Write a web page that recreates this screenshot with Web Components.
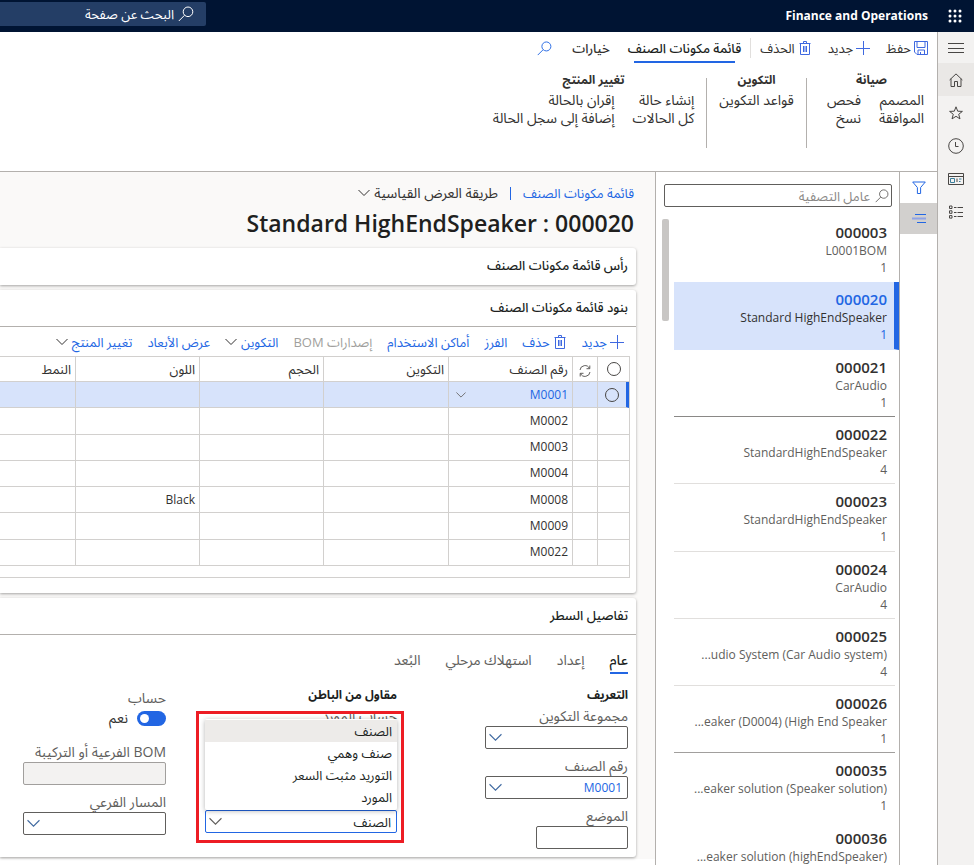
<!DOCTYPE html>
<html lang="ar" dir="rtl">
<head>
<meta charset="utf-8">
<title>Finance and Operations</title>
<style>
html, body { margin: 0; height: 100%; }
body { font-family: "Open Sans", "Noto Sans Arabic", "DejaVu Sans", sans-serif; font-size: 13px; line-height: 18px; color: #323130; background: #fff; overflow: hidden;
  --accent: #2266e3; --line: #b3b0ad; --soft: #d2d0ce; --field: #605e5c; }
</style>
</head>
<body>
<finops-app></finops-app>
<script>
const RESET = `
*{box-sizing:border-box}
button,input,select{font:inherit;color:inherit;margin:0;padding:0;border:0;background:none;appearance:none;border-radius:0;text-align:start}
button{white-space:nowrap;cursor:pointer}
ul{list-style:none;margin:0;padding:0}
h1,h2,h3,p{margin:0;font-size:inherit;font-weight:inherit}
a{text-decoration:none}
`;
function define(name, css, html) {
  customElements.define(name, class extends HTMLElement {
    constructor() {
      super();
      this.attachShadow({ mode: "open" });
    }
    connectedCallback() {
      const body = typeof html === "function" ? html(this) : html;
      this.shadowRoot.innerHTML = `<style>${RESET}${css}</style>${body}`;
    }
  });
}

const ICONS = {
  waffle: [14, `<g fill="currentColor" stroke="none">${[0, 5, 10].map(y => [0, 5, 10].map(x => `<circle cx="${x + 2}" cy="${y + 2}" r="1.5"/>`).join("")).join("")}</g>`],
  search: [16, `<circle cx="10" cy="5.8" r="4.8"/><path d="M6.5 9.3 0.8 15"/>`],
  save: [14, `<path d="M.5.5h13v13H3L.5 11z"/><path d="M3 .5v6h8v-6M4 13.5V9h6.500v4.500M6.500 13.500v-2.500"/>`],
  plus: [14, `<path d="M7.500 0v14M0 7.500h14"/>`],
  trash: [14, `<path d="M1.500 2.500h11M5.500 2.500V.5h3v2M2.500 2.500v11h9v-11M5.500 5v6M7 5v6M8.500 5v6"/>`],
  chevron: [12, `<path d="M.5 3 6 8.500 11.500 3"/>`],
  menu: [16, `<path d="M0 3.500h16M0 8.500h16M0 12.500h16"/>`],
  home: [14, `<path d="M.6 7 7 .9 13.400 7M2 5.700v7.800h3.500V8.500h3v5H12V5.700"/>`],
  star: [14, `<path d="M7 .8 8.700 5.200l4.700.2-3.700 2.900 1.300 4.600L7 10.300l-4 2.600 1.300-4.600L.6 5.400l4.700-.2z"/>`],
  clock: [16, `<circle cx="8" cy="8" r="7.300"/><path d="M7.500 4v4.500h3"/>`],
  workspace: [16, `<path d="M.5 2.500h15v11H.5zM.5 5.500h15"/><path d="M2.500 7.500h4v4h-4zM11 8h2.500M11 10.500h1.500" stroke="#3b7f9c"/><path d="M9 7.500v3.500"/>`],
  modules: [16, `<path d="M1.500 2h2.500v2.500H1.500zM1.500 6.800h2.500v2.500H1.500zM1.500 11.600h2.500v2.500H1.500zM6 3.500h2.500M9.500 3.500H15M6 8.500h2.500M9.500 8.500H15M6 12.500h2.500M9.500 12.500H15"/>`],
  funnel: [14, `<path d="M.7 1h12.600L8.600 6.500V12.500H5.400V6.500z"/>`],
  lines: [14, `<path d="M3 2.500h11M5 10.500h9"/><path d="M0 6.500h14" stroke="#8fa3e6" stroke-width="2"/>`],
  refresh: [12, `<path d="M1 5a5 5 0 0 1 9.500-1.500M11 7a5 5 0 0 1-9.500 1.500M10.800.5v3.200H7.500M1.200 11.500V8.300h3.300"/>`]
};
define("ui-icon", `:host{display:inline-flex;flex:none}svg{display:block;fill:none;stroke:currentColor;stroke-width:1}`,
  el => { const [n, art] = ICONS[el.getAttribute("name")]; const s = el.getAttribute("size") || n;
    return `<svg width="${s}" height="${s}" viewBox="0 0 ${n} ${n}" aria-hidden="true">${art}</svg>`; });

define("app-header", `
:host{display:flex;align-items:center;height:32px;background:#001433;color:#fff}
.waffle{width:38px;height:32px;display:flex;align-items:center;justify-content:center}
.brand{padding-inline:8px;font-weight:700;font-size:12px}
label{margin-inline-start:auto;width:206px;height:24px;margin-bottom:4px;background:#243e66;border-radius:0 2px 2px 0;display:flex;align-items:center;padding-inline-start:12px;gap:4px}
input{flex:1;min-width:0}input::placeholder{color:#fff;opacity:1}`, `
<button class="waffle" aria-label="التطبيقات"><ui-icon name="waffle"></ui-icon></button>
<span class="brand" dir="ltr">Finance and Operations</span>
<label><ui-icon name="search"></ui-icon><input type="search" placeholder="البحث عن صفحة" aria-label="البحث عن صفحة"></label>`);

define("nav-rail", `
:host{display:flex;flex-direction:column;width:37px;flex:none;background:#f3f2f1;border-inline-end:1px solid var(--line)}
button{height:33px;display:flex;align-items:center;justify-content:center;color:#484644}
.menu{height:31px}
.on{background:#eae8e6}`, `
<button class="menu" aria-label="القائمة"><ui-icon name="menu"></ui-icon></button>
<button class="on" aria-label="الصفحة الرئيسية"><ui-icon name="home"></ui-icon></button>
<button aria-label="المفضلة"><ui-icon name="star"></ui-icon></button>
<button aria-label="الأخيرة"><ui-icon name="clock"></ui-icon></button>
<button aria-label="مساحات العمل"><ui-icon name="workspace"></ui-icon></button>
<button aria-label="الوحدات"><ui-icon name="modules"></ui-icon></button>`);

define("icon-button", `:host{display:inline-flex}button{display:flex;align-items:center;gap:3px}button.after{gap:4px}ui-icon{color:var(--icon,#3f69e0)}`,
  el => { const i = `<ui-icon name="${el.getAttribute("icon")}"></ui-icon>`;
    return el.hasAttribute("after") ? `<button class="after"><slot></slot>${i}</button>` : `<button>${i}<slot></slot></button>`; });

define("action-group", `
:host{display:flex;flex-direction:column}
h3{font-weight:700;font-size:12px;text-align:center;margin-bottom:2px}
.cols{display:flex;gap:18px}`, el => `<h3>${el.getAttribute("label")}</h3><div class="cols"><slot></slot></div>`);
define("action-column", `:host{display:flex;flex-direction:column;align-items:flex-start;font-size:14px}button{height:18px;line-height:18px}`,
  el => el.getAttribute("items").split("|").map(t => `<button>${t}</button>`).join(""));

define("action-pane", `
:host{display:block;height:140px;border-bottom:1px solid var(--line);color:#323130}
.tabs{display:flex;align-items:center;height:32px;padding-inline-start:9px}
.tabs>*{flex:none}
.new,.del{margin-inline-start:16px}
.sep{width:1px;height:20px;background:#e1dfdd;margin-inline:9px}
.tab{height:32px;font-weight:500;position:relative}
.tab.on{margin-inline-end:18px;color:#201f1e}
.tab.on::after{content:"";position:absolute;inset:auto 6px 1px;height:2px;background:var(--accent)}
.find{margin-inline-start:20px;color:var(--accent);display:flex}
.groups{display:flex;padding-inline-start:13px;padding-top:7px}
.first{padding-inline-end:8px}
.rule{width:1px;height:70px;background:var(--line);margin-top:7px;margin-inline:12px}
`, `
<div class="tabs">
<icon-button icon="save">حفظ</icon-button><icon-button class="new" icon="plus">جديد</icon-button><icon-button class="del" icon="trash">الحذف</icon-button>
<span class="sep"></span><button class="tab on">قائمة مكونات الصنف</button><button class="tab">خيارات</button>
<button class="find" aria-label="بحث"><ui-icon name="search" size="15"></ui-icon></button>
</div>
<div class="groups">
<action-group label="صيانة"><action-column items="المصمم|الموافقة"></action-column><action-column class="first" items="فحص|نسخ"></action-column></action-group>
<span class="rule"></span>
<action-group label="التكوين"><action-column items="قواعد التكوين"></action-column></action-group>
<span class="rule"></span>
<action-group label="تغيير المنتج"><action-column items="إنشاء حالة|كل الحالات"></action-column><action-column items="إقران بالحالة|إضافة إلى سجل الحالة"></action-column></action-group>
</div>`);

define("view-strip", `
:host{display:flex;flex-direction:column;width:38px;flex:none;border-inline-end:1px solid var(--line);color:var(--accent)}
button{height:31px;display:flex;align-items:center;justify-content:center}
.on{background:#d2d0ce}`, `
<button aria-label="عوامل التصفية"><ui-icon name="funnel"></ui-icon></button>
<button class="on" aria-label="القائمة"><ui-icon name="lines"></ui-icon></button>`);

define("record-item", `
:host{display:block;padding:7px 8px 0 0;border-bottom:1px solid var(--rule,transparent);margin-inline-start:4px;color:#605e5c;font-size:12px}
:host([selected]){background:#d7e3fb;border-inline-start:5px solid var(--accent);margin-inline-start:0;padding-right:7px;color:#323130}
div{direction:ltr;text-align:right;white-space:nowrap;line-height:18px}
.id{font-size:15px;line-height:20px;font-weight:600;color:#323130}
.n{line-height:16px}
:host([selected]) .id,:host([selected]) .n{color:var(--accent)}`,
  el => `<div class="id">${el.getAttribute("code")}</div><div><slot></slot></div><div class="n">${el.getAttribute("count")}</div>`);

const RECORDS = [
  ["000003", "L0001BOM", 1, ""], ["000020", "Standard HighEndSpeaker", 1, ""], ["000021", "CarAudio", 1, "#8a8886"],
  ["000022", "StandardHighEndSpeaker", 4, "#e1dfdd"], ["000023", "StandardHighEndSpeaker", 1, "#e1dfdd"], ["000024", "CarAudio", 4, "#e1dfdd"],
  ["000025", "...udio System (Car Audio system)", 4, "#e1dfdd"], ["000026", "...eaker (D0004) (High End Speaker", 1, "#a19f9d"],
  ["000035", "...eaker solution (Speaker solution)", 1, ""], ["000036", "...eaker solution (highEndSpeaker)", 4, ""]];
define("record-list", `
:host{display:flex;flex-direction:column;width:244px;flex:none;border-inline-end:1px solid var(--line);overflow:hidden}
label{display:flex;align-items:center;gap:5px;margin:12px 7px 8px 8px;height:23px;flex:none;border:1px solid var(--field);border-radius:2px;padding-inline:2px;color:#605e5c}
input{flex:1;min-width:0}input::placeholder{color:#8a8886;opacity:1}
.body{display:flex}
ul{flex:1;min-width:0;display:grid;grid-auto-rows:1fr;min-height:673px}
li{display:grid}
.bar{width:7px;height:102px;margin:4px 5px 0 6px;border-radius:2px;background:#c8c6c4}`, () => `
<label><ui-icon name="search" size="14"></ui-icon><input type="search" placeholder="عامل التصفية" aria-label="عامل التصفية"></label>
<div class="body"><ul>${RECORDS.map(([c, t, n, r], i) => `<li><record-item code="${c}" count="${n}" ${i === 1 ? "selected" : ""} style="${r ? `--rule:${r}` : ""}">${t}</record-item></li>`).join("")}</ul><span class="bar"></span></div>`);

define("fast-tab", `
:host{display:block;background:#fff;border-radius:0 3px 3px 0;box-shadow:0 1px 3px rgba(0,0,0,.35)}
h2{height:37px;line-height:34px;padding-inline-start:8px;font-weight:500;color:#201f1e}
:host([open]) h2{border-bottom:1px solid var(--line)}`,
  el => `<h2>${el.getAttribute("label")}</h2><slot></slot>`);

define("line-grid", `
:host{display:block}
.bar{display:flex;align-items:center;height:29px;padding-inline-start:12px;gap:15px;color:var(--accent);white-space:nowrap}
.bar>*{flex:none}
.off{color:#a19f9d}
.frame{margin-inline-start:6px;border:1px solid var(--soft);border-left:0;padding-bottom:11px}
table{width:100%;height:209px;table-layout:fixed;border-collapse:separate;border-spacing:0}
th,td{height:26px;padding:0 4px;border:1px solid var(--soft);border-width:0 0 1px 1px;text-align:start;font-weight:400;white-space:nowrap;line-height:18px}
th{height:25px;color:#323130}
td{font-size:12px}
th:last-child,td:last-child{border-left:0}
tr.on td{background:#d7e3fb}
tr.on td:first-child{border-right:3px solid var(--accent)}
tr.on .item{color:var(--accent)}
.cell{display:flex;align-items:center;justify-content:space-between;padding-inline-end:3px}
.pick{text-align:center}
.pick input{display:block;width:14px;height:14px;border:1px solid #484644;border-radius:50%;margin:auto}
ui-icon{vertical-align:middle;color:#605e5c}
`, () => {
  const rows = ["M0001", "M0002", "M0003", "M0004", "M0008", "M0009", "M0022"];
  return `<div class="bar"><icon-button icon="plus">جديد</icon-button><icon-button icon="trash">حذف</icon-button><button>الفرز</button><button>أماكن الاستخدام</button><button class="off" disabled>إصدارات BOM</button>
<icon-button after icon="chevron" style="--icon:#323130">التكوين</icon-button><button>عرض الأبعاد</button><icon-button after icon="chevron" style="--icon:#323130">تغيير المنتج</icon-button></div>
<div class="frame"><table><colgroup><col style="width:32px"><col style="width:25px"><col style="width:124px"><col style="width:125px"><col style="width:124px"><col style="width:124px"><col></colgroup>
<thead><tr><th class="pick"><input type="radio" name="row" aria-label="تحديد الكل"></th><th class="pick"><ui-icon name="refresh"></ui-icon></th><th>رقم الصنف</th><th>التكوين</th><th>الحجم</th><th>اللون</th><th>النمط</th></tr></thead>
<tbody>${rows.map((r, i) => `<tr class="${i ? "" : "on"}"><td class="pick">${i ? "" : `<input type="radio" name="row" aria-label="${r}">`}</td><td></td><td class="item">${i ? r : `<div class="cell">${r}<ui-icon name="chevron" size="10"></ui-icon></div>`}</td><td></td><td></td><td>${r === "M0008" ? "Black" : ""}</td><td></td></tr>`).join("")}</tbody></table></div>`; });

define("form-field", `
:host{display:block;width:143px}
label{display:block;height:18px;line-height:16px;color:#605e5c;white-space:nowrap}
.box{height:23px;border:1px solid var(--field);border-radius:2px;display:flex;align-items:center;padding-inline:5px 3px;background:#fff;color:var(--accent);font-size:12px}
input{flex:1;min-width:0;width:0}
ui-icon{color:#3f69a0}
:host([disabled]) .box{background:#f3f2f1;border-color:#a19f9d}
:host([short]) .box{width:92px}`,
  el => `<label for="f">${el.getAttribute("label")}</label><div class="box"><input id="f" value="${el.getAttribute("value") || ""}" ${el.hasAttribute("disabled") ? "disabled" : ""}>${el.hasAttribute("lookup") ? '<ui-icon name="chevron" size="13"></ui-icon>' : ""}</div>`);

define("drop-down", `
:host{display:block;position:relative;width:192px;color:#201f1e}
.box{display:flex;align-items:center;height:23px;border:1px solid var(--accent);border-radius:2px;padding-inline:5px 3px}
select{flex:1;min-width:0}
ui-icon{color:#605e5c}
ul{position:absolute;bottom:100%;inset-inline:0;background:#fff;border-radius:2px;box-shadow:0 1px 5px rgba(0,0,0,.3);z-index:1;padding-block:1px 2px}
button{display:block;width:100%;height:22px;line-height:22px;padding-inline:5px}
.on{background:#edebe9}
.mark{position:absolute;inset:-99px -7px -10px -9px;border:3px solid #ed1c24;pointer-events:none;z-index:2}`, () => {
  const opts = ["الصنف", "صنف وهمي", "التوريد مثبت السعر", "المورد"];
  return `<ul role="listbox" aria-label="نوع البند">${opts.map((o, i) => `<li><button role="option" class="${i ? "" : "on"}">${o}</button></li>`).join("")}</ul>
<div class="box"><select aria-label="نوع البند">${opts.map(o => `<option>${o}</option>`).join("")}</select><ui-icon name="chevron" size="13"></ui-icon></div><span class="mark"></span>`; });

define("toggle-field", `
:host{display:block}
span,label{display:block;height:14px;line-height:14px;color:#605e5c}
.row{display:flex;align-items:center;gap:9px;height:18px;margin-top:4px}
.row label{color:#323130}
input{width:29px;height:15px;border-radius:8px;background:var(--accent);display:flex;align-items:center;padding:0 3px;cursor:pointer}
input::before{content:"";width:9px;height:9px;border-radius:50%;background:#fff;margin-inline-start:auto}`, `
<span>حساب</span><div class="row"><input type="checkbox" role="switch" id="s" checked><label for="s">نعم</label></div>`);

define("line-details", `
:host{display:block;padding:12px 8px 8px 0;font-size:14px}
nav{display:flex;gap:25px;height:27px}
nav button{height:27px;color:#605e5c;border-bottom:2px solid transparent}
nav .on{color:#201f1e;font-weight:500;border-color:var(--accent)}
.cols{display:grid;grid-template-columns:repeat(3,231px);margin-top:11px}
h3{font-weight:700;font-size:12px;color:#201f1e;height:23px;line-height:20px}
form-field+form-field{margin-top:9px}
drop-down{margin-top:61px;font-size:13px}
toggle-field{margin-bottom:17px}
.three{padding-top:6px}
`, `
<nav><button class="on">عام</button><button>إعداد</button><button>استهلاك مرحلي</button><button>البُعد</button></nav>
<div class="cols">
<div><h3>التعريف</h3><form-field label="مجموعة التكوين" lookup></form-field><form-field label="رقم الصنف" value="M0001" lookup></form-field><form-field short label="الموضع"></form-field></div>
<div><h3>مقاول من الباطن</h3><form-field label="حساب المورد" lookup></form-field><drop-down></drop-down></div>
<div class="three"><toggle-field></toggle-field><form-field disabled label="BOM الفرعية أو التركيبة"></form-field><form-field lookup label="المسار الفرعي"></form-field></div>
</div>`);

define("record-page", `
:host{display:block;flex:1;min-width:0;overflow:hidden}
main{background:#faf9f8;padding:11px 19px 2px 0}
.crumb{display:flex;align-items:center;gap:12px;height:20px;color:#323130;padding-inline-start:2px}
.crumb a{color:var(--accent)}
.crumb i{width:1px;height:13px;background:var(--accent)}
.crumb icon-button{font-size:14px}
h1{font-size:23px;line-height:30px;font-weight:600;color:#201f1e;direction:ltr;text-align:right;padding-right:2px;margin:5px 0 10px}
fast-tab+fast-tab{margin-top:5px}
.g{padding-bottom:15px}`, `
<main><div class="crumb"><a href="#">قائمة مكونات الصنف</a><i></i><icon-button after icon="chevron" style="--icon:#323130">طريقة العرض القياسية</icon-button></div>
<h1>Standard HighEndSpeaker : 000020</h1>
<fast-tab label="رأس قائمة مكونات الصنف"></fast-tab>
<fast-tab open label="بنود قائمة مكونات الصنف"><line-grid class="g"></line-grid></fast-tab>
<fast-tab open label="تفاصيل السطر"><line-details></line-details></fast-tab></main>`);

define("finops-app", `
:host{display:flex;flex-direction:column;height:100vh;overflow:hidden}
.shell{flex:1;min-height:0;display:flex}
.work{flex:1;min-width:0;display:flex;flex-direction:column}
.split{flex:1;min-height:0;display:flex}`, `
<app-header></app-header>
<div class="shell"><nav-rail></nav-rail><div class="work"><action-pane></action-pane>
<div class="split"><view-strip></view-strip><record-list></record-list><record-page></record-page></div></div></div>`);
</script>
</body>
</html>
